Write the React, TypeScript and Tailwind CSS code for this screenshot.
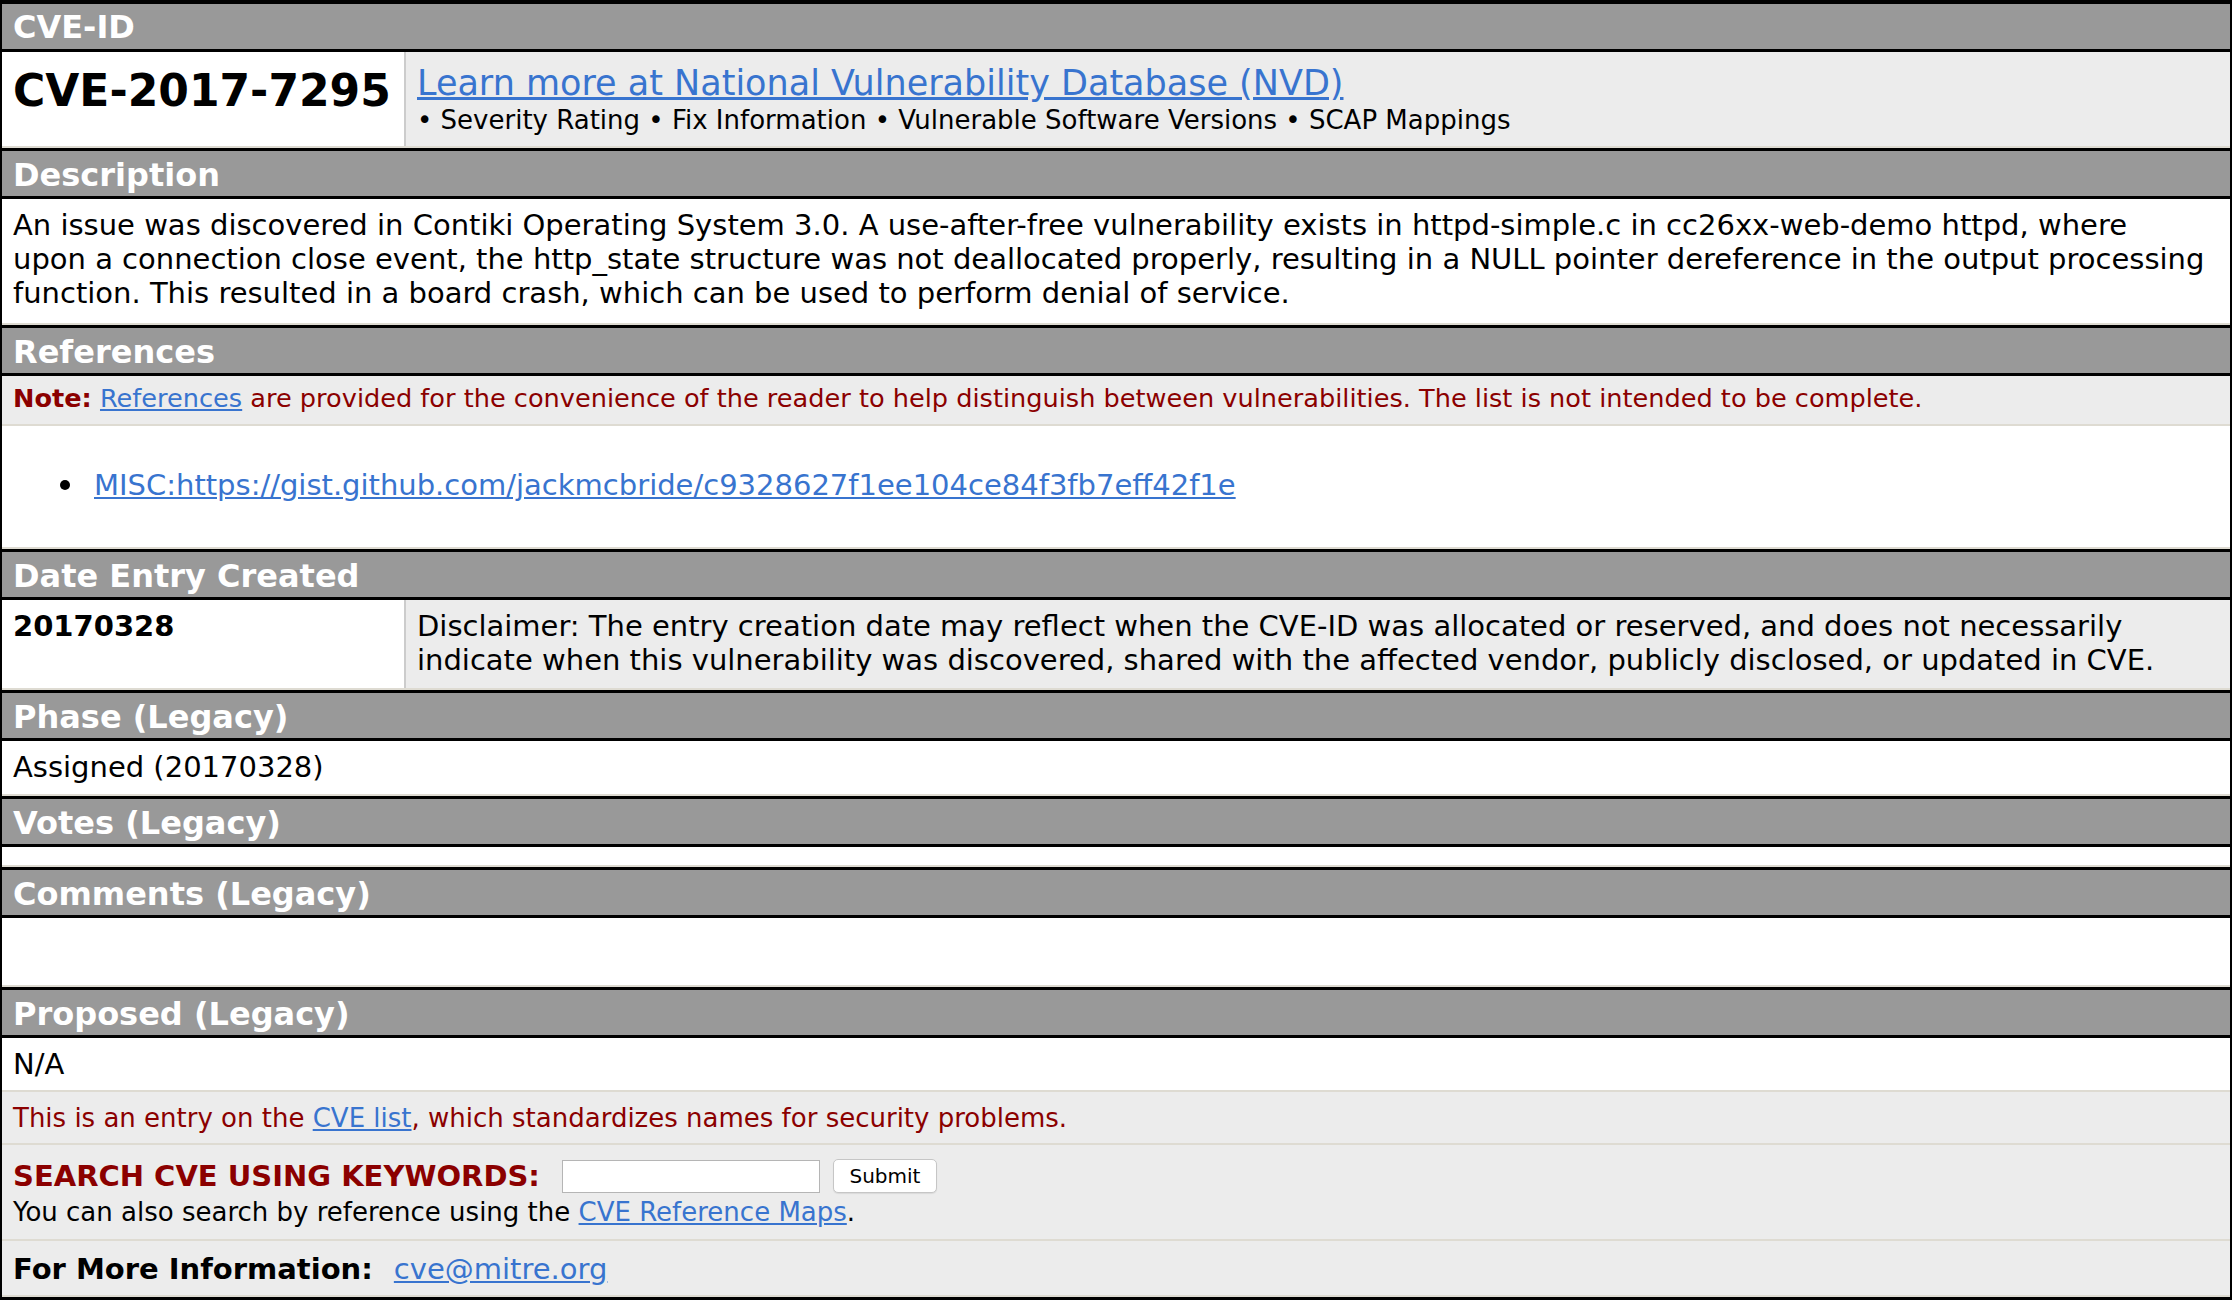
import React from "react";

function Hdr({ children, first }: { children: React.ReactNode; first?: boolean }) {
  return (
    <div
      className={
        first
          ? "h-[48px] border-b-[3px] border-black bg-[#999999] pl-[11px] pt-[2px] text-[32px] font-bold leading-[43px] text-white"
          : "h-[51px] border-y-[3px] border-black bg-[#999999] pl-[11px] pt-[3px] text-[32px] font-bold leading-[42px] text-white"
      }
    >
      {children}
    </div>
  );
}

const link = "text-[#3874cf] underline";

export default function App() {
  return (
    <div className="min-h-[1304px] bg-white font-['DejaVu_Sans',sans-serif] text-black">
      <div className="border-x-2 border-t-4 border-b-[3px] border-black">
        <Hdr first>CVE-ID</Hdr>
        <div className="grid h-[96px] grid-cols-[402px_1fr] border-b-2 border-[#dedbd2]">
          <div className="bg-white pl-[11px] pt-[17px] text-[44px] font-bold leading-[44px]">CVE-2017-7295</div>
          <div className="border-l-2 border-[#cccccc] bg-[#ececec] pl-[11px] pt-[12px]">
            <div className="text-[35px] leading-[38px]">
              <a href="#" className={link}>
                Learn more at National Vulnerability Database (NVD)
              </a>
            </div>
            <div className="pt-[1px] text-[26px] leading-[34px]">
              • Severity Rating • Fix Information • Vulnerable Software Versions • SCAP Mappings
            </div>
          </div>
        </div>

        <Hdr>Description</Hdr>
        <div className="h-[126px] whitespace-nowrap border-b-2 border-[#dedbd2] bg-white pl-[11px] pt-[9px] text-[29px] leading-[34px]">
          An issue was discovered in Contiki Operating System 3.0. A use-after-free vulnerability exists in httpd-simple.c in cc26xx-web-demo httpd, where
          <br />
          upon a connection close event, the http_state structure was not deallocated properly, resulting in a NULL pointer dereference in the output processing
          <br />
          function. This resulted in a board crash, which can be used to perform denial of service.
        </div>

        <Hdr>References</Hdr>
        <div className="h-[50px] whitespace-nowrap border-b-2 border-[#dedbd2] bg-[#ececec] pl-[11px] pt-[5px] text-[25.6px] leading-[34px] text-[#8b0000]">
          <span className="font-bold">Note:</span>{" "}
          <a href="#" className={link}>
            References
          </a>{" "}
          are provided for the convenience of the reader to help distinguish between vulnerabilities. The list is not intended to be complete.
        </div>
        <div className="h-[123px] border-b-2 border-[#dedbd2] bg-white pl-[58px] pt-[42px] text-[29px] leading-[34px]">
          <div className="flex items-center">
            <span className="h-[10px] w-[10px] rounded-full bg-black" />
            <a href="#" className={"ml-[24px] " + link}>
              MISC:https://gist.github.com/jackmcbride/c9328627f1ee104ce84f3fb7eff42f1e
            </a>
          </div>
        </div>

        <Hdr>Date Entry Created</Hdr>
        <div className="grid h-[90px] grid-cols-[402px_1fr] border-b-2 border-[#dedbd2] text-[29px] leading-[34px]">
          <div className="bg-white pl-[11px] pt-[9px] font-bold">20170328</div>
          <div className="whitespace-nowrap border-l-2 border-[#cccccc] bg-[#ececec] pl-[11px] pt-[9px]">
            Disclaimer: The entry creation date may reflect when the CVE-ID was allocated or reserved, and does not necessarily
            <br />
            indicate when this vulnerability was discovered, shared with the affected vendor, publicly disclosed, or updated in CVE.
          </div>
        </div>

        <Hdr>Phase (Legacy)</Hdr>
        <div className="h-[55px] border-b-2 border-[#dedbd2] bg-white pl-[11px] pt-[9px] text-[29px] leading-[34px]">
          Assigned (20170328)
        </div>

        <Hdr>Votes (Legacy)</Hdr>
        <div className="h-[20px] border-b-2 border-[#dedbd2] bg-white" />

        <Hdr>Comments (Legacy)</Hdr>
        <div className="h-[69px] border-b-2 border-[#dedbd2] bg-white" />

        <Hdr>Proposed (Legacy)</Hdr>
        <div className="h-[54px] border-b-2 border-[#dedbd2] bg-white pl-[11px] pt-[9px] text-[29px] leading-[34px]">N/A</div>

        <div className="h-[53px] border-b-2 border-[#dedbd2] bg-[#ececec] pl-[11px] pt-[9px] text-[26px] leading-[34px] text-[#8b0000]">
          This is an entry on the{" "}
          <a href="#" className={link}>
            CVE list
          </a>
          , which standardizes names for security problems.
        </div>

        <div className="h-[96px] border-b-2 border-[#dedbd2] bg-[#ececec] pl-[11px] pt-[13px] text-[29px] leading-[34px]">
          <div className="flex h-[36px] items-center">
            <span className="font-bold text-[#8b0000]">SEARCH CVE USING KEYWORDS:</span>
            <input
              type="text"
              className="ml-[22px] h-[33px] w-[258px] border border-[#b5b5b5] bg-white"
            />
            <button className="ml-[13px] h-[34px] w-[104px] rounded-[5px] border border-[#c6c6c6] bg-white text-[20px] leading-[30px] text-black shadow-[0_1px_1px_rgba(0,0,0,0.08)]">
              Submit
            </button>
          </div>
          <div className="pt-[1px] text-[26px]">
            You can also search by reference using the{" "}
            <a href="#" className={link}>
              CVE Reference Maps
            </a>
            .
          </div>
        </div>

        <div className="h-[56px] border-b-2 border-[#dedbd2] bg-[#ececec] pl-[11px] pt-[11px] text-[29px] leading-[34px]">
          <div className="flex">
            <span className="font-bold">For More Information:</span>
            <a href="#" className={"ml-[21px] " + link}>
              cve@mitre.org
            </a>
          </div>
        </div>
      </div>
    </div>
  );
}
